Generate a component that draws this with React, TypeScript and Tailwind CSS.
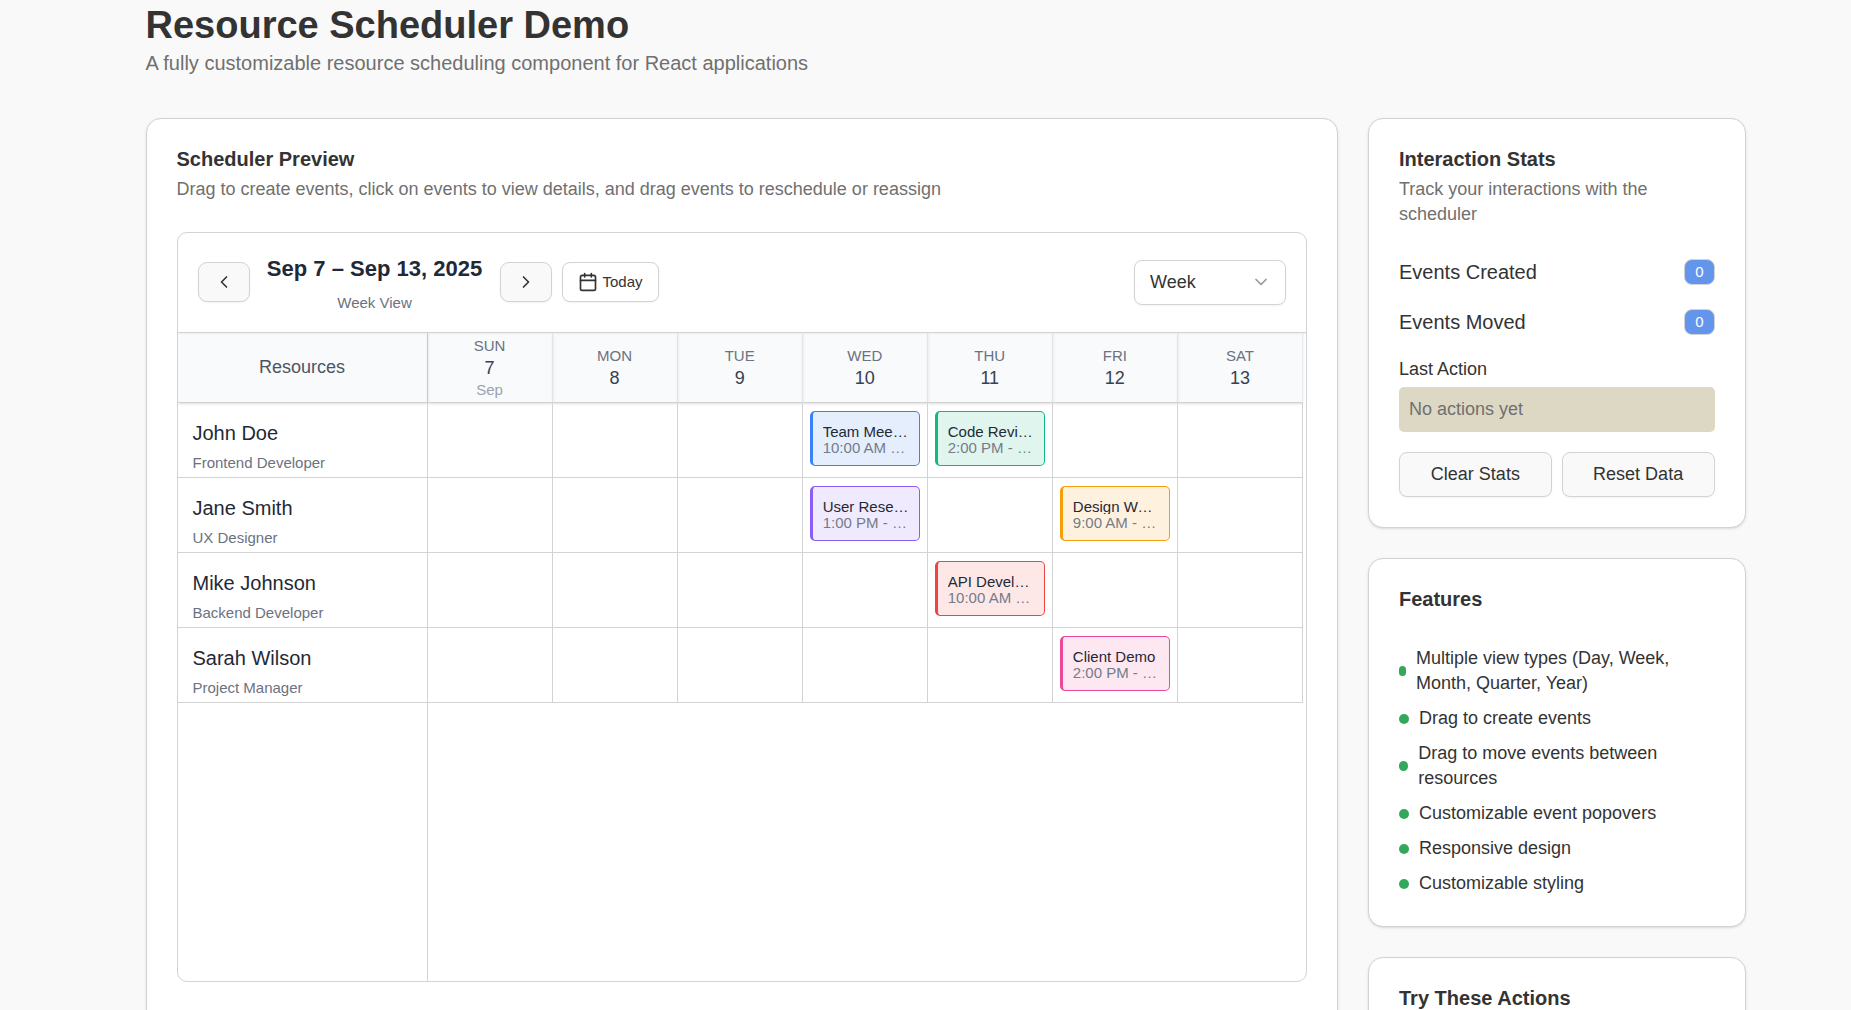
import { useState, type ReactNode } from "react";
import { Calendar, ChevronDown, ChevronLeft, ChevronRight } from "lucide-react";

type EventItem = { day: number; title: string; time: string; tone: string };
type Resource = { name: string; role: string; events: EventItem[] };

const days = [
  { name: "SUN", date: 7, month: "Sep" },
  { name: "MON", date: 8 },
  { name: "TUE", date: 9 },
  { name: "WED", date: 10 },
  { name: "THU", date: 11 },
  { name: "FRI", date: 12 },
  { name: "SAT", date: 13 },
];

const resources: Resource[] = [
  {
    name: "John Doe",
    role: "Frontend Developer",
    events: [
      { day: 10, title: "Team Meeting", time: "10:00 AM - 11:00 AM", tone: "border-[#3b82f6] bg-[#e5eefd]" },
      { day: 11, title: "Code Review", time: "2:00 PM - 3:30 PM", tone: "border-[#10b981] bg-[#e0f5ee]" },
    ],
  },
  {
    name: "Jane Smith",
    role: "UX Designer",
    events: [
      { day: 10, title: "User Research", time: "1:00 PM - 3:00 PM", tone: "border-[#8b5cf6] bg-[#f0eafe]" },
      { day: 12, title: "Design Workshop", time: "9:00 AM - 12:00 PM", tone: "border-[#f59e0b] bg-[#fef2df]" },
    ],
  },
  {
    name: "Mike Johnson",
    role: "Backend Developer",
    events: [{ day: 11, title: "API Development", time: "10:00 AM - 4:00 PM", tone: "border-[#ef4444] bg-[#fde8e7]" }],
  },
  {
    name: "Sarah Wilson",
    role: "Project Manager",
    events: [{ day: 12, title: "Client Demo", time: "2:00 PM - 3:00 PM", tone: "border-[#ec4899] bg-[#fde7f1]" }],
  },
];

const features = [
  "Multiple view types (Day, Week, Month, Quarter, Year)",
  "Drag to create events",
  "Drag to move events between resources",
  "Customizable event popovers",
  "Responsive design",
  "Customizable styling",
];

function Card({ title, description, children }: { title: string; description?: string; children?: ReactNode }) {
  return (
    <section className="h-full rounded-[15px] border border-[#d3d3d3] bg-white p-[30px] shadow-sm">
      <div className={description ? "mb-[30px]" : "mb-[37px]"}>
        <h2 className="text-[20px] leading-[20px] font-bold">{title}</h2>
        {description && <p className="mt-2 text-[18px] leading-[25px] text-[#707070]">{description}</p>}
      </div>
      {children}
    </section>
  );
}

function Event({ item }: { item: EventItem }) {
  return (
    <button
      type="button"
      className={`mx-[7px] mt-2 block h-[55px] w-[calc(100%-14px)] rounded-[5px] border border-l-[3px] p-[10px] text-left text-[15px] leading-[18px] ${item.tone}`}
    >
      <span className="block h-4 truncate text-[#1f2937]">{item.title}</span>
      <span className="block h-4 truncate text-[#747c89]">{item.time}</span>
    </button>
  );
}

function Scheduler() {
  const [view, setView] = useState("Week");
  return (
    <div className="flex min-h-[750px] flex-col overflow-hidden rounded-[10px] border border-[#d3d3d3]">
      <div className="relative z-10 flex h-[100px] items-center justify-between border-b border-[#d3d3d3] px-5 pb-px shadow-xs">
        <div className="flex items-center">
          <button type="button" aria-label="Previous week" className="flex h-10 w-[52px] items-center justify-center rounded-[9px] border border-[#d3d3d3] bg-[#f9f9f9] shadow-xs">
            <ChevronLeft size={20} />
          </button>
          <div className="mx-[15px] min-w-[220px] text-center">
            <h3 className="text-[22px] leading-[35px] font-bold text-[#1f2937]">Sep 7 – Sep 13, 2025</h3>
            <p className="mt-[7px] text-[15px] leading-[20px] text-[#6b7280]">Week View</p>
          </div>
          <button type="button" aria-label="Next week" className="flex h-10 w-[52px] items-center justify-center rounded-[9px] border border-[#d3d3d3] bg-[#f9f9f9] shadow-xs">
            <ChevronRight size={20} />
          </button>
          <button type="button" className="ml-[10px] flex h-10 items-center gap-[5px] rounded-[8px] border border-[#d3d3d3] bg-white px-[15px] text-[15px] shadow-xs">
            <Calendar size={20} />
            Today
          </button>
        </div>
        <div className="relative">
          <select
            aria-label="View"
            value={view}
            onChange={(e) => setView(e.target.value)}
            className="h-[45px] w-[152px] appearance-none rounded-[8px] border border-[#d3d3d3] bg-white px-[15px] text-[18px] shadow-xs"
          >
            {["Day", "Week", "Month", "Quarter", "Year"].map((v) => (
              <option key={v}>{v}</option>
            ))}
          </select>
          <ChevronDown size={20} className="pointer-events-none absolute top-3 right-[15px] opacity-50" />
        </div>
      </div>

      <div className="pr-[3px]">
        <table className="w-full table-fixed border-separate border-spacing-0">
          <thead>
            <tr className="bg-[#f8fafc]">
              <th scope="col" className="h-[70px] w-[250px] border-r border-b border-[#d3d3d3] p-0 text-[18px] font-normal text-[#4b5563] shadow-sm">
                Resources
              </th>
              {days.map((d) => (
                <th key={d.name} scope="col" className="border-r border-b border-r-[#eceef1] border-b-[#d3d3d3] p-0 text-[15px] leading-[20px] font-normal shadow-sm">
                  <div className="text-[#6b7280]">{d.name}</div>
                  <div className="text-[18px] leading-[24px] text-[#374151]">{d.date}</div>
                  {d.month && <div className="text-[#9ca3af]">{d.month}</div>}
                </th>
              ))}
            </tr>
          </thead>
          <tbody>
            {resources.map((r) => (
              <tr key={r.name}>
                <th scope="row" className="h-[75px] border-r border-b border-[#d3d3d3] px-[15px] pt-[15px] pb-0 text-left align-top font-normal">
                  <div className="text-[20px] leading-[30px] text-[#1f2937]">{r.name}</div>
                  <div className="mt-[5px] text-[15px] leading-[20px] text-[#6b7280]">{r.role}</div>
                </th>
                {days.map((d) => (
                  <td key={d.name} className="border-r border-b border-[#d3d3d3] p-0 align-top">
                    {r.events.filter((e) => e.day === d.date).map((e) => <Event key={e.title} item={e} />)}
                  </td>
                ))}
              </tr>
            ))}
          </tbody>
        </table>
      </div>
      <div className="flex flex-1">
        <div className="w-[250px] border-r border-[#d3d3d3]" />
      </div>
    </div>
  );
}

function Stat({ label, value }: { label: string; value: number }) {
  return (
    <div className="mb-5 flex items-center justify-between text-[20px] leading-[30px]">
      <span>{label}</span>
      <span className="rounded-[8px] border border-[#d3d3d3] bg-[#6495ed] px-[10px] py-[2px] text-[15px] leading-[20px] text-white">{value}</span>
    </div>
  );
}

export default function App() {
  return (
    <div className="h-screen overflow-hidden bg-[#f9f9f9] font-['Liberation_Sans',Arial,sans-serif] text-[#333333]">
      <div className="mx-auto max-w-[1640px] pt-[3px] pl-10">
        <header className="mb-10">
          <h1 className="text-[38px] leading-[45px] font-bold">Resource Scheduler Demo</h1>
          <p className="text-[20px] leading-[30px] text-[#707070]">A fully customizable resource scheduling component for React applications</p>
        </header>

        <div className="grid grid-cols-4 gap-[30px]">
          <main className="col-span-3">
            <Card title="Scheduler Preview" description="Drag to create events, click on events to view details, and drag events to reschedule or reassign">
              <Scheduler />
            </Card>
          </main>

          <aside className="flex flex-col gap-[30px]">
            <div>
              <Card title="Interaction Stats" description="Track your interactions with the scheduler">
                <Stat label="Events Created" value={0} />
                <Stat label="Events Moved" value={0} />
                <p className="text-[18px] leading-[25px]">Last Action</p>
                <p className="mt-[5px] rounded-[5px] bg-[#ddd8c4] p-[10px] text-[18px] leading-[25px] text-[#707070]">No actions yet</p>
                <div className="mt-5 grid grid-cols-2 gap-[10px] text-[18px]">
                  <button type="button" className="h-[45px] rounded-[8px] border border-[#d3d3d3] bg-[#f9f9f9] shadow-xs">Clear Stats</button>
                  <button type="button" className="h-[45px] rounded-[8px] border border-[#d3d3d3] bg-[#f9f9f9] shadow-xs">Reset Data</button>
                </div>
              </Card>
            </div>

            <div>
              <Card title="Features">
                <ul className="flex flex-col gap-[10px] text-[18px] leading-[25px]">
                  {features.map((f) => (
                    <li key={f} className="flex items-center gap-[10px]">
                      <span className="h-[10px] w-[10px] rounded-full bg-[#34a85a]" />
                      <span>{f}</span>
                    </li>
                  ))}
                </ul>
              </Card>
            </div>

            <div>
              <Card title="Try These Actions" />
            </div>
          </aside>
        </div>
      </div>
    </div>
  );
}
